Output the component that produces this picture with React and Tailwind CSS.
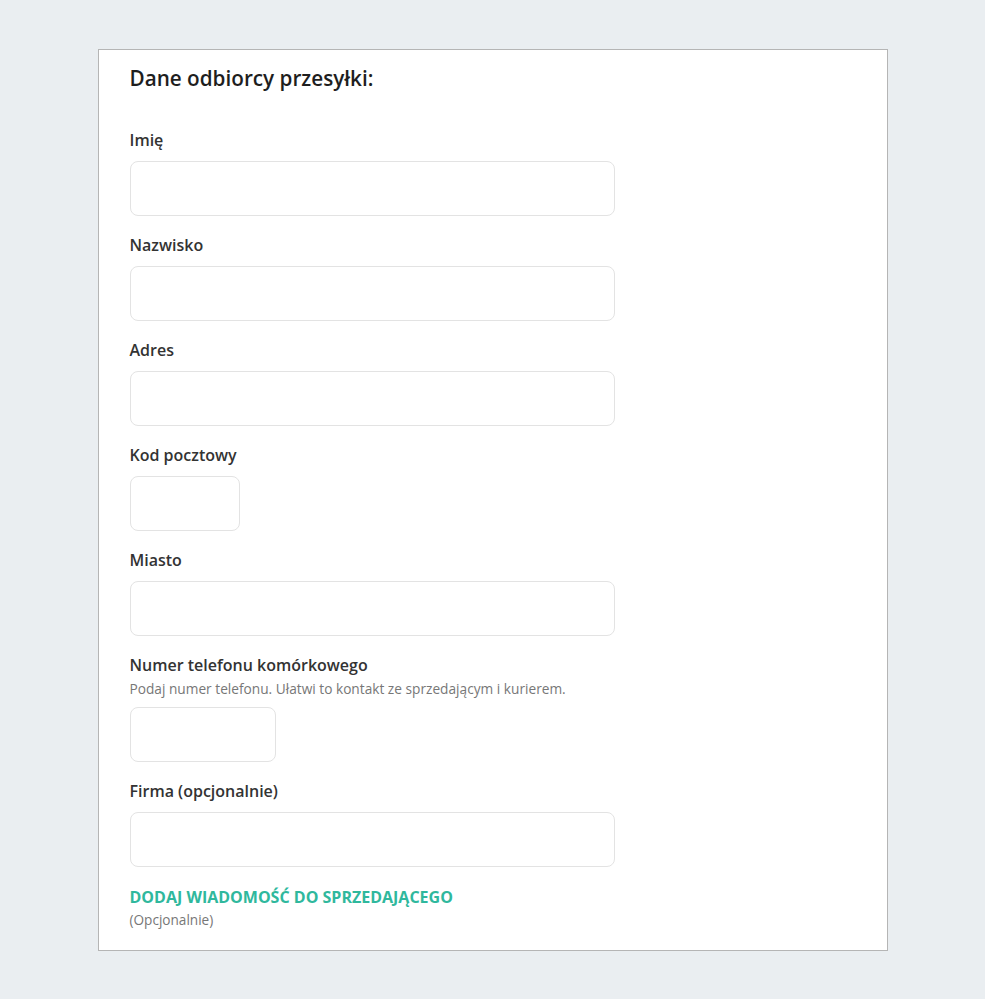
import React from 'react';

const Field = ({ label, hint, width = 'w-[485px]' }) => (
  <div className="mb-[17px]">
    <label className="block text-[16px] leading-6 font-semibold text-[#333]">{label}</label>
    {hint && <p className="text-[13.7px] leading-[19px] text-[#777] mt-[2px]">{hint}</p>}
    <input
      type="text"
      className={`${width} h-[55px] mt-[9px] rounded-lg border border-[#e3e3e3] bg-white outline-none px-3`}
    />
  </div>
);

export default function App() {
  return (
    <div className="min-h-screen bg-[#eaeef1] pt-[49px] pb-[49px]" style={{ fontFamily: '"Open Sans", sans-serif' }}>
      <div className="mx-auto w-[790px] bg-white border border-[#b5b5b5] pl-[31px] pt-[14px] pb-[21px]">
        <h2 className="text-[20.7px] leading-7 font-semibold text-[#1e1e1e] mb-9">Dane odbiorcy przesyłki:</h2>
        <Field label="Imię" />
        <Field label="Nazwisko" />
        <Field label="Adres" />
        <Field label="Kod pocztowy" width="w-[110px]" />
        <Field label="Miasto" />
        <Field
          label="Numer telefonu komórkowego"
          hint="Podaj numer telefonu. Ułatwi to kontakt ze sprzedającym i kurierem."
          width="w-[146px]"
        />
        <Field label="Firma (opcjonalnie)" />
        <div className="pt-px">
          <button className="block text-[16px] leading-6 font-bold text-[#2fb89d] uppercase">Dodaj wiadomość do sprzedającego</button>
          <p className="text-[13.6px] leading-[19px] text-[#777] mt-px">(Opcjonalnie)</p>
        </div>
      </div>
    </div>
  );
}
